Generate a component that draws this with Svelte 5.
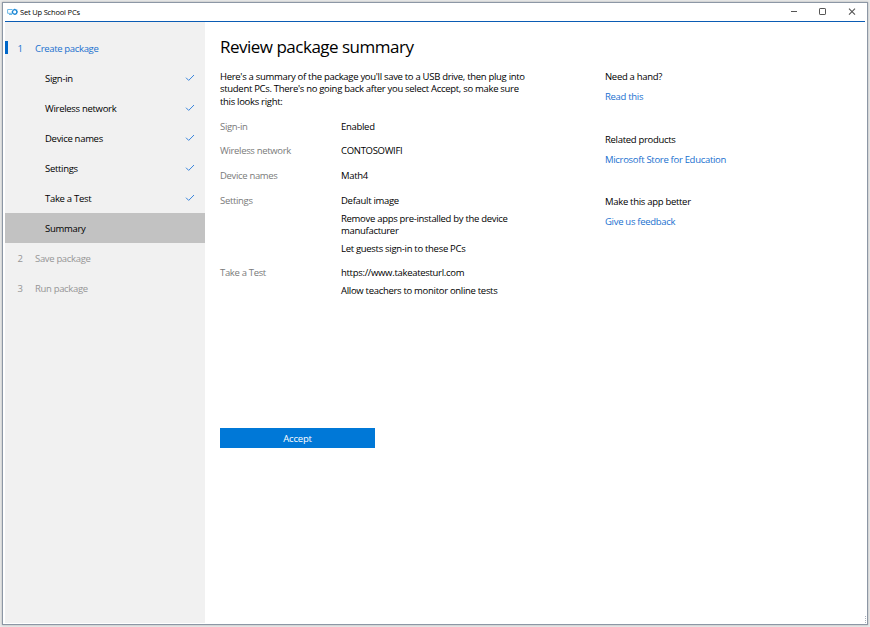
<script>
  const steps = [
    { label: 'Sign-in', done: true },
    { label: 'Wireless network', done: true },
    { label: 'Device names', done: true },
    { label: 'Settings', done: true },
    { label: 'Take a Test', done: true },
    { label: 'Summary', done: false, active: true }
  ];
  const later = [
    { number: 2, label: 'Save package' },
    { number: 3, label: 'Run package' }
  ];
  const summary = [
    { name: 'Sign-in', values: [['Enabled']] },
    { name: 'Wireless network', values: [['CONTOSOWIFI']] },
    { name: 'Device names', values: [['Math4']] },
    {
      name: 'Settings',
      values: [
        ['Default image'],
        ['Remove apps pre-installed by the device', 'manufacturer'],
        ['Let guests sign-in to these PCs']
      ]
    },
    { name: 'Take a Test', values: [['https://www.takeatesturl.com'], ['Allow teachers to monitor online tests']] }
  ];
  const help = [
    { title: 'Need a hand?', link: 'Read this' },
    { title: 'Related products', link: 'Microsoft Store for Education' },
    { title: 'Make this app better', link: 'Give us feedback' }
  ];
</script>

<div class="desktop">
  <div class="window">
    <header>
      <svg class="logo" width="11" height="8" viewBox="0 0 11 8" fill="none">
        <path d="M5.2 1.5H.6v3.8h4.8M2 6.5h3" stroke="#6eb8e6" />
        <circle cx="7.7" cy="3.9" r="2.2" stroke="#1785d4" stroke-width="1.2" />
        <path d="M7.7.7v1M7.7 6v1M4.5 3.9h1M10 3.9h1M5.5 1.7l.6.6M9.3 5.5l.6.6M5.5 6.1l.6-.6M9.3 2.3l.6-.6" stroke="#1785d4" stroke-width=".8" />
      </svg>
      <span class="title">Set Up School PCs</span>
      <div class="controls">
        <svg width="8" height="8" viewBox="0 0 8 8" fill="none"><path d="M1 3.5h6" stroke="#555" /></svg>
        <svg width="8" height="8" viewBox="0 0 8 8" fill="none"><rect x=".5" y=".5" width="6" height="6" rx=".6" stroke="#555" /></svg>
        <svg width="8" height="8" viewBox="0 0 8 8" fill="none"><path d="M1 .7l6 6M7 .7l-6 6" stroke="#555" stroke-width="1.1" /></svg>
      </div>
    </header>
    <div class="body">
      <nav>
        <div class="step current"><span class="num">1</span><span>Create package</span></div>
        {#each steps as step}
          <div class="step sub" class:active={step.active}>
            <span>{step.label}</span>
            {#if step.done}
              <svg class="check" width="10" height="8" viewBox="0 0 10 8" fill="none"><path d="M1 3.7l2.7 2.7L9 1" stroke="#3b86dc" /></svg>
            {/if}
          </div>
        {/each}
        {#each later as step}
          <div class="step later"><span class="num">{step.number}</span><span>{step.label}</span></div>
        {/each}
      </nav>
      <main>
        <h1>Review package summary</h1>
        <p>
          Here's a summary of the package you'll save to a USB drive, then plug into<br />
          student PCs. There's no going back after you select Accept, so make sure<br />
          this looks right:
        </p>
        <dl>
          {#each summary as row}
            <dt>{row.name}</dt>
            <dd>
              {#each row.values as lines}
                <div class="value">
                  {#each lines as line}<div>{line}</div>{/each}
                </div>
              {/each}
            </dd>
          {/each}
        </dl>
        <button>Accept</button>
      </main>
      <aside>
        {#each help as item}
          <section>
            <div>{item.title}</div>
            <a href="#top">{item.link}</a>
          </section>
        {/each}
      </aside>
    </div>
    <svg class="grip" width="1" height="7" viewBox="0 0 1 7"><path d="M.5 0v7" stroke="#a9b0ba" stroke-dasharray="1 1" /></svg>
  </div>
</div>

<style>
  .desktop {
    box-sizing: border-box;
    width: 870px;
    height: 627px;
    padding: 2px;
    background: #e9eaea;
    color: #000;
    font: 9.5px/12.5px 'Open Sans', 'Noto Sans', sans-serif;
    letter-spacing: -0.3px;
    overflow: hidden;
  }
  .window {
    box-sizing: border-box;
    width: 866px;
    height: 623px;
    padding: 0 2px 1px;
    border: 1px solid #8c97a5;
    background: #fff;
    box-shadow: 0 0 2px #aaa;
    display: flex;
    flex-direction: column;
    position: relative;
  }
  .grip {
    position: absolute;
    right: 1px;
    bottom: 1px;
  }
  header {
    box-sizing: border-box;
    height: 19px;
    border-bottom: 1px solid #0b5cb4;
    padding: 0 9px 0 2px;
    display: flex;
    align-items: center;
    flex: none;
  }
  .logo { margin-right: 2px; }
  .title {
    font-size: 7.5px;
    letter-spacing: -0.18px;
    white-space: nowrap;
  }
  .controls {
    margin-left: auto;
    display: flex;
    gap: 21px;
  }
  .controls svg, .check, .logo { display: block; }
  .body { display: flex; flex: 1; }
  nav {
    box-sizing: border-box;
    width: 200px;
    padding-top: 11px;
    background: #f1f1f1;
  }
  .step {
    box-sizing: border-box;
    height: 30px;
    display: flex;
    align-items: center;
    padding: 0 10px 0 12.5px;
    position: relative;
    letter-spacing: -0.33px;
  }
  .step span { padding-top: 1.5px; }
  .num { width: 17.5px; }
  .step.sub {
    padding-left: 40px;
    justify-content: space-between;
    letter-spacing: -0.3px;
  }
  .active { background: #c2c2c2; }
  .current { color: #1a70cf; }
  .current::before {
    content: '';
    position: absolute;
    left: 0;
    top: 8px;
    width: 2.5px;
    height: 13px;
    background: #0067c8;
  }
  .later { color: #969696; }
  main {
    width: 385px;
    padding-left: 15px;
    box-sizing: border-box;
  }
  h1 {
    margin: 12px 0 0;
    font-size: 17px;
    letter-spacing: -0.5px;
    line-height: 26px;
    font-weight: 400;
    white-space: nowrap;
  }
  p {
    margin: 10.5px 0 0;
    white-space: nowrap;
  }
  dl {
    margin: 12.7px 0 0;
    display: grid;
    grid-template-columns: 121px auto;
    row-gap: 12.3px;
    height: 178px;
    align-content: start;
  }
  dt { color: #7a7a7a; letter-spacing: -0.33px; }
  dd {
    margin: 0;
    display: grid;
    row-gap: 5px;
    white-space: nowrap;
  }
  button {
    display: block;
    width: 155px;
    height: 20px;
    margin-top: 129.2px;
    padding: 2px 0 0;
    border: 0;
    background: #0078d7;
    color: #fff;
    font: inherit;
    letter-spacing: -0.2px;
  }
  aside { padding: 49px 0 0 15px; }
  section {
    height: 62.5px;
    display: flex;
    flex-direction: column;
    gap: 7.5px;
    white-space: nowrap;
  }
  a { color: #1a70cf; text-decoration: none; }
</style>
